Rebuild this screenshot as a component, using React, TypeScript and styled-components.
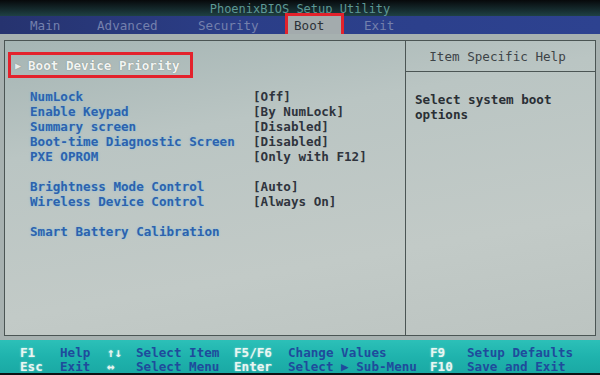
import styled, { createGlobalStyle } from "styled-components";

const GlobalStyle = createGlobalStyle`
  html, body {
    margin: 0;
    padding: 0;
    background: #0d1114;
  }
`;

const mono = `"DejaVu Sans Mono", "Liberation Mono", monospace`;

const Screen = styled.div`
  width: 600px;
  height: 375px;
  display: flex;
  flex-direction: column;
  overflow: hidden;
  font-family: ${mono};
  font-weight: bold;
  font-size: 12.6px;
  line-height: 15px;
  background: #0d1114;
`;

const TitleBar = styled.div`
  height: 16px;
  display: flex;
  align-items: flex-end;
  justify-content: center;
  background: linear-gradient(180deg, #07090b 0%, #14282b 55%, #1f4144 100%);
  color: #5d9894;
  font-weight: normal;
  font-size: 12px;
  line-height: 13px;
`;

const MenuBar = styled.div`
  height: 18px;
  display: flex;
  align-items: stretch;
  padding-left: 24px;
  background: linear-gradient(90deg, #26336f 0%, #2b3e88 40%, #2d4290 100%);
`;

const MenuItem = styled.div<{ $w: number; $indent?: number; $active?: boolean }>`
  width: ${(p) => p.$w}px;
  padding-left: ${(p) => p.$indent ?? 6}px;
  display: flex;
  align-items: center;
  color: ${(p) => (p.$active ? "#2d3238" : "#7480ad")};
  font-weight: normal;
  background: ${(p) => (p.$active ? "#a3abad" : "transparent")};
  outline: ${(p) => (p.$active ? "3px solid #e3222c" : "none")};
  box-sizing: border-box;
`;

const Body = styled.div`
  flex: 1;
  display: flex;
  flex-direction: column;
  padding: 6px 4px 4px 4px;
  background: #a7b1b0;
`;

const Panel = styled.div`
  height: 296px;
  box-sizing: border-box;
  display: grid;
  grid-template-columns: 400px 1fr;
  border: 1px solid #4b5554;
  background: linear-gradient(170deg, #a5b5b4 0%, #bac5c3 30%, #c2cac7 70%, #bcc4c1 100%);
`;

const LeftPane = styled.div`
  display: flex;
  flex-direction: column;
  padding: 14px 0 0 0;
`;

const SubMenu = styled.div`
  align-self: flex-start;
  margin-left: 6px;
  height: 20px;
  padding: 0 10px 0 4px;
  display: flex;
  align-items: center;
  gap: 7px;
  color: #f2f4f2;
  text-shadow: 0 0 1px #6d7878;
  outline: 3px solid #e3222c;
`;

const Arrow = styled.span`
  font-size: 10px;
  color: #e8ecea;
`;

const Rows = styled.div`
  margin-top: 14px;
  display: flex;
  flex-direction: column;
`;

const Row = styled.div<{ $gap?: boolean }>`
  display: grid;
  grid-template-columns: 223px 1fr;
  padding-left: 25px;
  height: 15px;
  margin-top: ${(p) => (p.$gap ? 15 : 0)}px;
  white-space: pre;
`;

const Label = styled.span`
  color: #2d62ae;
  text-shadow: 0 0 2px rgba(90, 190, 235, 0.55);
`;

const Value = styled.span`
  color: #2f343d;
`;

const RightPane = styled.div`
  border-left: 1px solid #4b5554;
  display: flex;
  flex-direction: column;
`;

const HelpHeader = styled.div`
  height: 31px;
  box-sizing: border-box;
  border-bottom: 1px solid #4b5554;
  display: flex;
  align-items: center;
  justify-content: center;
  color: #3d4347;
  font-weight: normal;
  padding-right: 6px;
`;

const HelpText = styled.div`
  padding: 20px 0 0 9px;
  color: #2a2f35;
  white-space: pre;
`;

const BottomBar = styled.div`
  height: 33px;
  margin-bottom: 2px;
  box-sizing: border-box;
  padding-top: 4px;
  display: grid;
  grid-template-columns: 20px 40px 47px 29px 98px 54px 142px 37px 1fr;
  grid-template-rows: 14px 14px;
  align-content: center;
  background: linear-gradient(180deg, #2cc0b8 0%, #1fb3ad 50%, #1aa9a4 100%);
  white-space: pre;
`;

const Key = styled.span<{ $col: number }>`
  grid-column: ${(p) => p.$col};
  color: #eaf6f2;
  text-shadow: 0 0 2px rgba(255, 255, 255, 0.5);
`;

const Desc = styled.span<{ $col: number }>`
  grid-column: ${(p) => p.$col};
  color: #1f4b9c;
`;

const settings = [
  { label: "NumLock", value: "[Off]" },
  { label: "Enable Keypad", value: "[By NumLock]" },
  { label: "Summary screen", value: "[Disabled]" },
  { label: "Boot-time Diagnostic Screen", value: "[Disabled]" },
  { label: "PXE OPROM", value: "[Only with F12]" },
  { label: "Brightness Mode Control", value: "[Auto]", gap: true },
  { label: "Wireless Device Control", value: "[Always On]" },
  { label: "Smart Battery Calibration", value: "", gap: true },
];

const keys = [
  ["F1", "Help", "↑↓", "Select Item", "F5/F6", "Change Values", "F9", "Setup Defaults"],
  ["Esc", "Exit", "↔", "Select Menu", "Enter", "Select ▶ Sub-Menu", "F10", "Save and Exit"],
];

export default function App() {
  return (
    <>
      <GlobalStyle />
      <Screen>
        <TitleBar>PhoenixBIOS Setup Utility</TitleBar>
        <MenuBar>
          <MenuItem $w={67}>Main</MenuItem>
          <MenuItem $w={101}>Advanced</MenuItem>
          <MenuItem $w={96}>Security</MenuItem>
          <MenuItem $w={53} $active>
            Boot
          </MenuItem>
          <MenuItem $w={80} $indent={23}>
            Exit
          </MenuItem>
        </MenuBar>
        <Body>
          <Panel>
            <LeftPane>
              <SubMenu>
                <Arrow>▶</Arrow>
                Boot Device Priority
              </SubMenu>
              <Rows>
                {settings.map((s) => (
                  <Row key={s.label} $gap={s.gap}>
                    <Label>{s.label}</Label>
                    <Value>{s.value}</Value>
                  </Row>
                ))}
              </Rows>
            </LeftPane>
            <RightPane>
              <HelpHeader>Item Specific Help</HelpHeader>
              <HelpText>{"Select system boot\noptions"}</HelpText>
            </RightPane>
          </Panel>
        </Body>
        <BottomBar>
          {keys.map((line, r) =>
            line.map((t, i) =>
              i % 2 === 0 ? (
                <Key key={`${r}-${i}`} $col={i + 2}>
                  {t}
                </Key>
              ) : (
                <Desc key={`${r}-${i}`} $col={i + 2}>
                  {t}
                </Desc>
              )
            )
          )}
        </BottomBar>
      </Screen>
    </>
  );
}
